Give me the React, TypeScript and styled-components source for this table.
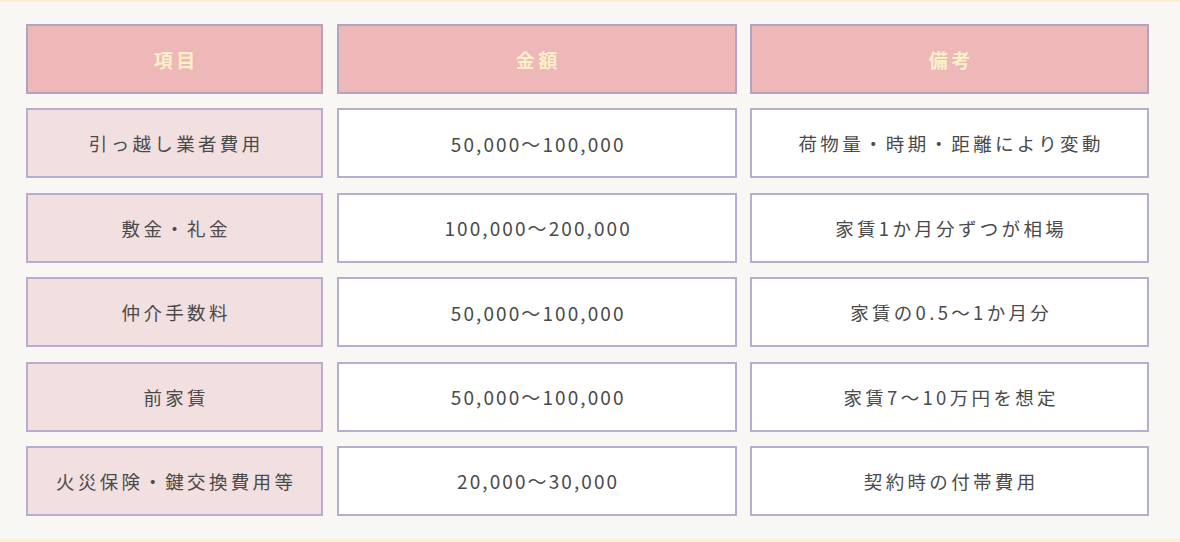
import React from "react";
import styled, {createGlobalStyle} from "styled-components";

const GlobalStyle = createGlobalStyle`
  html, body {
    margin: 0;
    padding: 0;
    background: #f8f7f3;
  }
  body {
    font-family: "Noto Sans CJK JP", "Noto Sans", sans-serif;
  }
`

const Page = styled.div`
  width: 1180px;
  height: 542px;
  box-sizing: border-box;
  background: #f8f7f3;
  border-top: 2px solid #fcefd2;
  border-bottom: 3px solid #fcefd2;
  padding: 22px 0 0 26px;
`

const Table = styled.div`
  display: grid;
  grid-template-columns: 297px 400px 399px;
  grid-auto-rows: 70px;
  column-gap: 13.5px;
  row-gap: 14.4px;
`

type CellKind = 'head' | 'label' | 'body';

const Cell = styled.div<{ $kind: CellKind }>`
  box-sizing: border-box;
  display: flex;
  align-items: center;
  justify-content: center;
  border: 2px solid ${p => p.$kind === 'head' ? '#b3a2c4' : '#b8acd0'};
  background: ${p => p.$kind === 'head' ? '#eeb8b8' : p.$kind === 'label' ? '#f2dfe0' : '#ffffff'};
  color: ${p => p.$kind === 'head' ? '#fdf0c9' : '#4a4a4a'};
  font-weight: ${p => p.$kind === 'head' ? 700 : 400};
  font-size: ${p => p.$kind === 'head' ? '19px' : '18.5px'};
  letter-spacing: 0.18em;
  padding-left: 0.18em;
`

const Num = styled.span`
  font-size: 19px;
  letter-spacing: 0.11em;
`

const headers = ['項目', '金額', '備考'];

const rows = [
  {item: '引っ越し業者費用', amount: '50,000〜100,000', note: '荷物量・時期・距離により変動'},
  {item: '敷金・礼金', amount: '100,000〜200,000', note: '家賃1か月分ずつが相場'},
  {item: '仲介手数料', amount: '50,000〜100,000', note: '家賃の0.5〜1か月分'},
  {item: '前家賃', amount: '50,000〜100,000', note: '家賃7〜10万円を想定'},
  {item: '火災保険・鍵交換費用等', amount: '20,000〜30,000', note: '契約時の付帯費用'},
];

const App = () => {
  return (
    <>
      <GlobalStyle/>
      <Page>
        <Table>
          {headers.map(h => (
            <Cell key={h} $kind="head">{h}</Cell>
          ))}
          {rows.map(r => (
            <React.Fragment key={r.item}>
              <Cell $kind="label">{r.item}</Cell>
              <Cell $kind="body"><Num>{r.amount}</Num></Cell>
              <Cell $kind="body">{r.note}</Cell>
            </React.Fragment>
          ))}
        </Table>
      </Page>
    </>
  );
};

export default App;
